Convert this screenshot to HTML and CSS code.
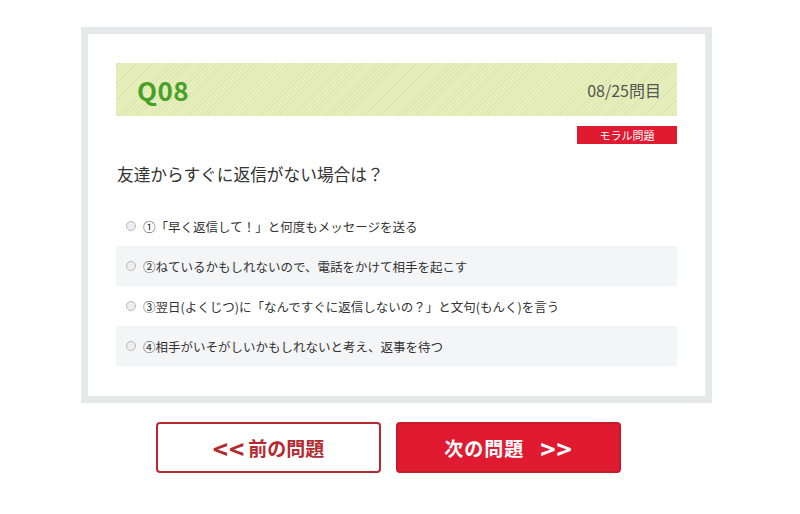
FILE: index.html
```html
<!DOCTYPE html>
<html lang="ja">
  <head>
    <meta charset="UTF-8" />
    <meta name="viewport" content="width=device-width, initial-scale=1.0" />
    <title>Q08</title>
    <link rel="stylesheet" href="styles.css">
  </head>
  <body>
    <div class="quiz">
      <div class="quiz-box">
        <div class="quiz-head">
          <span class="quiz-no">Q08</span>
          <span class="quiz-count">08/25問目</span>
        </div>
        <div class="quiz-tag-row">
          <span class="quiz-tag">モラル問題</span>
        </div>
        <p class="quiz-question">友達からすぐに返信がない場合は？</p>
        <ul class="quiz-options">
          <li><span class="radio"></span>①「早く返信して！」と何度もメッセージを送る</li>
          <li class="alt"><span class="radio"></span>②ねているかもしれないので、電話をかけて相手を起こす</li>
          <li><span class="radio"></span>③翌日(よくじつ)に「なんですぐに返信しないの？」と文句(もんく)を言う</li>
          <li class="alt"><span class="radio"></span>④相手がいそがしいかもしれないと考え、返事を待つ</li>
        </ul>
      </div>
      <div class="quiz-nav">
        <a class="btn btn-prev" href="#"><span class="arrow arrow-left">&lt;&lt;</span>前の問題</a>
        <a class="btn btn-next" href="#">次の問題<span class="arrow arrow-right">&gt;&gt;</span></a>
      </div>
    </div>
  </body>
</html>
```

FILE: styles.css
```css
body {
  margin: 0;
  background-color: #fff;
  font-family: "Noto Sans CJK JP", "Noto Sans", sans-serif;
  color: #333;
}
.quiz {
  width: 631px;
  margin-left: 81px;
  padding-top: 27px;
}
.quiz-box {
  border: 7px solid #e7e8ea;
  padding: 29px 28px 30px;
  background-color: #fff;
}
.quiz-head {
  display: flex;
  justify-content: space-between;
  align-items: center;
  height: 53px;
  padding: 0 16px 0 21px;
  background: repeating-linear-gradient(
    135deg,
    #e8efbf 0,
    #e8efbf 2px,
    #dde7ab 2px,
    #dde7ab 3px
  );
}
.quiz-no {
  font-size: 26px;
  font-weight: bold;
  color: #46a02a;
  letter-spacing: 0.5px;
}
.quiz-count {
  font-size: 16px;
  color: #555;
}
.quiz-tag-row {
  display: flex;
  justify-content: flex-end;
  margin-top: 10px;
}
.quiz-tag {
  width: 100px;
  height: 18px;
  line-height: 18px;
  text-align: center;
  background-color: #e01a30;
  color: #fff;
  font-size: 11px;
}
.quiz-question {
  margin: 18px 0 0 1px;
  font-size: 16.7px;
  line-height: 24px;
  color: #333;
}
.quiz-options {
  list-style: none;
  margin: 20px 0 0;
  padding: 0;
}
.quiz-options li {
  display: flex;
  align-items: center;
  height: 40px;
  padding-left: 10px;
  font-size: 12.5px;
  color: #333;
}
.quiz-options li.alt {
  background-color: #f4f5f7;
}
.radio {
  width: 8px;
  height: 8px;
  border: 1px solid #b8b8b8;
  border-radius: 50%;
  background-color: #eee;
  margin-right: 7px;
}
.quiz-nav {
  display: flex;
  gap: 15px;
  margin: 19px 0 0 75px;
}
.btn {
  box-sizing: border-box;
  width: 225px;
  height: 51px;
  display: flex;
  justify-content: center;
  align-items: center;
  border-radius: 4px;
  font-size: 19px;
  font-weight: bold;
  text-decoration: none;
}
.btn .arrow {
  font-size: 26px;
  letter-spacing: 1px;
  line-height: 1;
}
.btn .arrow-left {
  margin-right: 3px;
}
.btn .arrow-right {
  margin-left: 16px;
}
.btn-prev {
  border: 2px solid #b42a30;
  color: #b42a30;
  background-color: #fff;
}
.btn-next {
  border: 2px solid #c41a2a;
  color: #fff;
  background-color: #e01a30;
  letter-spacing: 1px;
}
```
